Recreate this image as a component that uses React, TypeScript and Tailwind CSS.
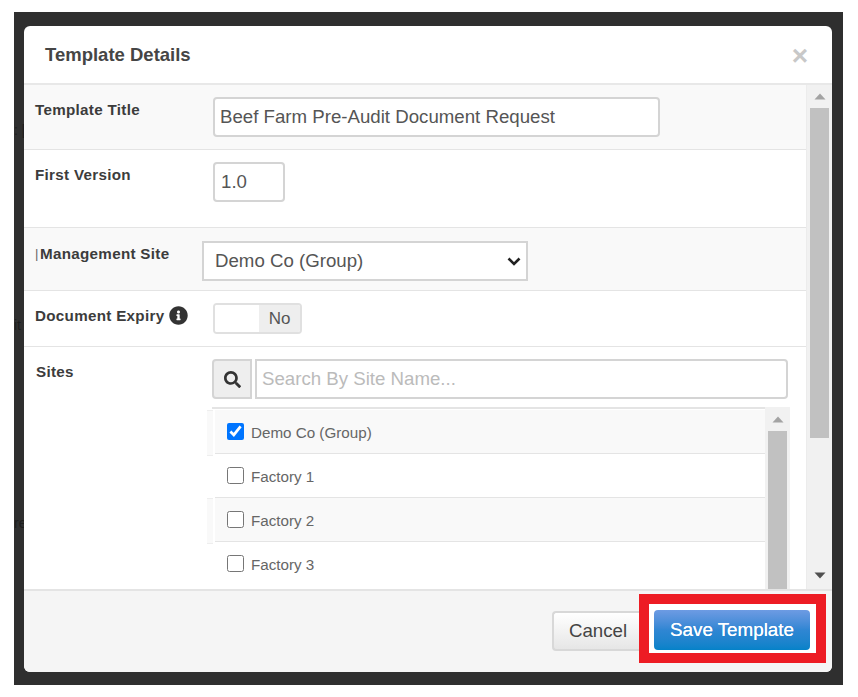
import { FaInfoCircle, FaSearch } from "react-icons/fa";

const sites = ["Demo Co (Group)", "Factory 1", "Factory 2", "Factory 3"];

function Arrow({ up }: { up?: boolean }) {
  return (
    <svg width="12" height="7" viewBox="0 0 12 7" className="fill-current shrink-0">
      <path d={up ? "M6 0.5 L11.5 6.5 L0.5 6.5 Z" : "M0.5 0.5 L11.5 0.5 L6 6.5 Z"} />
    </svg>
  );
}

function Row({
  label,
  height,
  shaded,
  children,
}: {
  label: React.ReactNode;
  height: string;
  shaded?: boolean;
  children: React.ReactNode;
}) {
  return (
    <div className={`flex border-b border-[#e4e4e4] pl-[11px] ${height} ${shaded ? "bg-[#f9f9f9]" : "bg-white"}`}>
      {label}
      {children}
    </div>
  );
}

const labelClass = "text-[15.2px] leading-5 font-bold text-[#3c3c3c] tracking-[0.3px]";

export default function App() {
  return (
    <div className="w-[858px] h-[697px] bg-white pt-3 pl-3.5 font-['Liberation_Sans',Arial,sans-serif]">
      <div className="relative w-[829px] h-[673px] bg-[#2f2f2f] pt-3.5 pl-2.5 overflow-hidden">
        <span className="absolute left-0 top-[501px] text-[14px] text-[#1d1d1d]">re</span>
        <span className="absolute left-0 top-[303px] text-[14px] text-[#1d1d1d]">it</span>
        <span className="absolute left-0 top-[108px] text-[14px] text-[#1d1d1d]">: [</span>
        <div className="relative w-[808px] h-[646px] rounded-md bg-white flex flex-col overflow-hidden">
          {/* header */}
          <div className="h-[59px] shrink-0 flex items-center justify-between pl-[21px] pr-[24px] border-b-2 border-[#e8e8e8]">
            <h4 className="text-[18.5px] font-bold text-[#454545]">Template Details</h4>
            <button className="mt-[2px] text-[28px] leading-none font-bold text-[#c8c8c8]">×</button>
          </div>

          {/* body */}
          <div className="flex h-[504px] shrink-0 overflow-hidden">
            <div className="w-[783px] border-r border-[#ececec]">
              <Row shaded height="h-[65px]" label={<label className={`${labelClass} w-[178px] pt-[15px]`}>Template Title</label>}>
                <input
                  readOnly
                  value="Beef Farm Pre-Audit Document Request"
                  className="mt-[12px] w-[447px] h-10 px-[5px] bg-white border-2 border-[#d4d4d4] rounded text-[18.67px] text-[#555] outline-none"
                />
              </Row>
              <Row height="h-[78px]" label={<label className={`${labelClass} w-[178px] pt-[15px]`}>First Version</label>}>
                <input
                  readOnly
                  value="1.0"
                  className="mt-[12px] w-[72px] h-10 px-[6px] bg-white border-2 border-[#d4d4d4] rounded text-[18.67px] text-[#555] outline-none"
                />
              </Row>
              <Row
                shaded
                height="h-[63px]"
                label={
                  <label className={`${labelClass} w-[167px] pt-4 flex`}>
                    <span className="w-[5px] font-normal text-[13px] text-[#666]">|</span>
                    Management Site
                  </label>
                }
              >
                <div className="relative mt-[13px] w-[326px] h-10">
                  <select className="appearance-none w-full h-full pl-[11px] bg-white border-2 border-[#d4d4d4] text-[18.67px] text-[#555] outline-none">
                    <option>Demo Co (Group)</option>
                  </select>
                  <svg width="14" height="9" viewBox="0 0 14 9" className="absolute right-[7px] top-[16px] fill-none stroke-[#222] stroke-[2.6]">
                    <path d="M1.5 1.5 L7 7 L12.5 1.5" />
                  </svg>
                </div>
              </Row>
              <Row
                height="h-[56px]"
                label={
                  <label className={`${labelClass} w-[178px] pt-[15px] flex items-start gap-[5px]`}>
                    Document Expiry
                    <FaInfoCircle className="text-[19px] text-[#333] shrink-0" />
                  </label>
                }
              >
                <div className="mt-[12px] flex w-[89px] h-[31px] border-2 border-[#e0e0e0] rounded overflow-hidden">
                  <span className="w-[44px] bg-white" />
                  <span className="flex-1 bg-[#eee] text-[#555] text-[17px] leading-[27px] text-center">No</span>
                </div>
              </Row>
              <div className="flex pl-[12px] h-[242px]">
                <label className={`${labelClass} w-[176px] pt-[15px]`}>Sites</label>
                <div className="w-[578px] pt-[12px]">
                  <div className="flex gap-[3px] h-10">
                    <div className="w-10 flex items-center justify-center bg-[#eee] border-2 border-[#d4d4d4] rounded-l">
                      <FaSearch className="text-[17px] text-[#333]" />
                    </div>
                    <input
                      readOnly
                      placeholder="Search By Site Name..."
                      className="w-[533px] px-[5px] bg-white border-2 border-[#d4d4d4] rounded-r text-[18.67px] outline-none placeholder:text-[#bbb]"
                    />
                  </div>
                  <div className="flex mt-[8px] h-[182px]">
                    <div className="w-[553px] border-t-2 border-[#e4e4e4] pt-[1px] pl-[3px]">
                      {sites.map((site, i) => (
                        <div
                          key={site}
                          className={`relative h-[44px] flex items-center pl-[12px] gap-[7px] border-b ${i < 3 ? "border-[#e4e4e4]" : "border-transparent"} ${i % 2 === 0 ? "bg-[#f9f9f9]" : "bg-white"}`}
                        >
                          {i % 2 === 0 && (
                            <span className="absolute -left-[8px] top-0 w-[6px] h-[46px] bg-[#f9f9f9] border-y border-[#eeeeee]" />
                          )}
                          <input type="checkbox" readOnly checked={i === 0} className="w-[17px] h-[17px] m-0 accent-[#0075ff]" />
                          <span className="text-[15.2px] leading-5 pt-[3px] text-[#666]">{site}</span>
                        </div>
                      ))}
                    </div>
                    <div className="w-[25px] bg-[#f1f1f1] flex flex-col items-center pt-[9px] text-[#a3a3a3]">
                      <Arrow up />
                      <div className="mt-[8px] w-[19px] flex-1 bg-[#c1c1c1]" />
                    </div>
                  </div>
                </div>
              </div>
            </div>
            <div className="w-[25px] bg-[#f1f1f1] flex flex-col items-center pt-[8px] px-[2px] text-[#a3a3a3]">
              <Arrow up />
              <div className="mt-[8px] w-[19px] h-[330px] shrink-0 bg-[#c1c1c1]" />
              <div className="mt-auto mb-[10px] text-[#505050]">
                <Arrow />
              </div>
            </div>
          </div>

          {/* footer */}
          <div className="flex-1 flex justify-end items-start bg-[#f5f5f5] border-t-2 border-[#e4e4e4] pt-[3px] pr-[6px]">
            <button className="mt-[17px] w-[87px] h-10 pl-[15px] text-left text-[18.67px] text-[#444] bg-linear-to-b from-white to-[#e6e6e6] border-2 border-r-0 border-[#d8d8d8] rounded-l">
              Cancel
            </button>
            <div className="border-[10px] border-[#ed1c24] bg-white pt-[6px] pb-[3px] pl-[5px] pr-[6px]">
              <button className="block w-[156px] h-10 text-[18.8px] text-white rounded bg-linear-to-b from-[#6d9be3] via-[#2f86d3] to-[#0482c9] [text-shadow:0_0_0.6px_#fff]">
                Save Template
              </button>
            </div>
          </div>
        </div>
      </div>
    </div>
  );
}
